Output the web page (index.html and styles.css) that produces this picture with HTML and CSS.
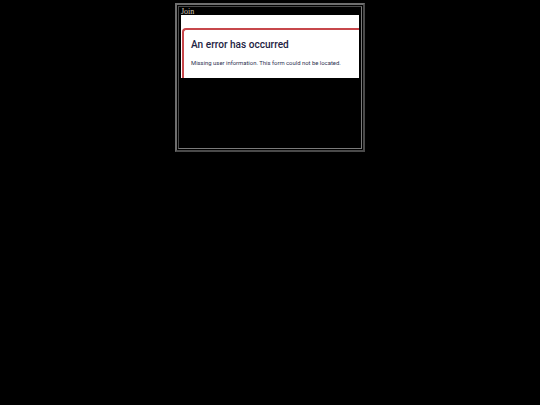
FILE: index.html
```html
<!DOCTYPE html>
<html lang="en">
<head>
<meta charset="utf-8">
<title>Join</title>
<link rel="stylesheet" href="styles.css">
</head>
<body>
<div class="frame">
  <div class="cell">
    <div class="legend">Join</div>
    <div class="view">
      <div class="card">
        <h1 class="title">An error has occurred</h1>
        <p class="message">Missing user information. This form could not be located.</p>
      </div>
    </div>
  </div>
</div>
</body>
</html>
```

FILE: styles.css
```css
html, body {
  margin: 0;
  padding: 0;
  background: #000;
}
body {
  padding: 3px 0 0 175px;
}
.frame {
  width: 184px;
  height: 143px;
  border: 2px solid;
  border-color: #6e6e6e #4a4a4a #4a4a4a #6e6e6e;
  padding: 1px;
}
.cell {
  box-sizing: border-box;
  width: 184px;
  height: 143px;
  border: 1px solid;
  border-color: #4a4a4a #7a7a7a #7a7a7a #4a4a4a;
  padding: 0 2px 0 2px;
}
.legend {
  height: 8px;
  font-family: "Liberation Serif", serif;
  font-size: 8px;
  line-height: 9px;
  color: #d2c8b8;
  padding-left: 0;
}
.view {
  width: 178px;
  height: 63px;
  background: #fff;
  overflow: hidden;
  padding-top: 13px;
  box-sizing: border-box;
}
.card {
  box-sizing: border-box;
  margin-left: 1px;
  width: 200px;
  height: 50px;
  border-top: 2px solid #c7474b;
  border-left: 2px solid #c7474b;
  border-top-left-radius: 4px;
  padding: 8px 0 0 7px;
  font-family: Roboto, "Liberation Sans", sans-serif;
}
.title {
  margin: 0;
  font-size: 10.1px;
  line-height: 13px;
  font-weight: 500;
  color: #1d2342;
}
.message {
  margin: 8px 0 0 0;
  font-size: 5.9px;
  line-height: 8px;
  color: #2c3150;
}
```
